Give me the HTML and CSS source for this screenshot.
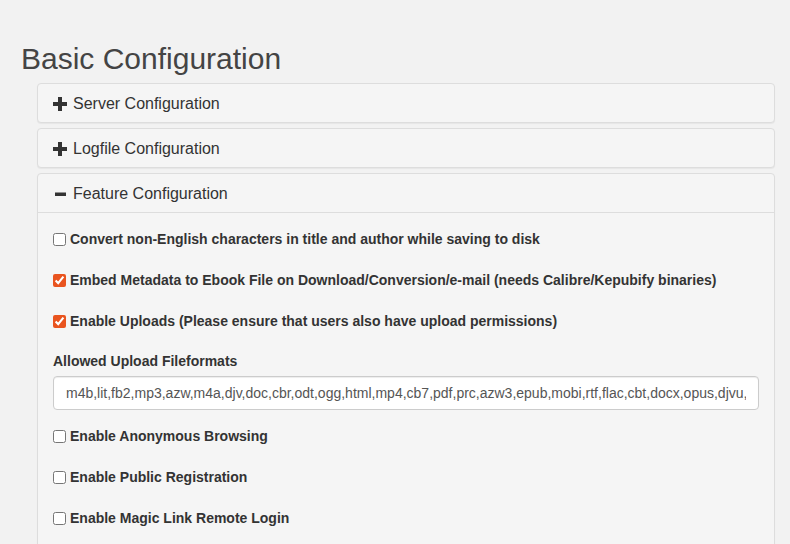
FILE: index.html
```html
<!DOCTYPE html>
<html lang="en">
<head>
<meta charset="utf-8">
<title>Basic Configuration</title>
<link rel="stylesheet" href="styles.css">
</head>
<body>
<div class="page">
  <h2 class="title">Basic Configuration</h2>
  <div class="panel-group">
    <div class="panel">
      <div class="panel-heading">
        <span class="icon"><svg width="14" height="14" viewBox="0 0 14 14"><path d="M5 0h4v5h5v4H9v5H5V9H0V5h5z" fill="#333"/></svg></span>
        <span class="panel-title">Server Configuration</span>
      </div>
    </div>
    <div class="panel">
      <div class="panel-heading">
        <span class="icon"><svg width="14" height="14" viewBox="0 0 14 14"><path d="M5 0h4v5h5v4H9v5H5V9H0V5h5z" fill="#333"/></svg></span>
        <span class="panel-title">Logfile Configuration</span>
      </div>
    </div>
    <div class="panel">
      <div class="panel-heading open">
        <span class="icon"><svg width="14" height="14" viewBox="0 0 14 14"><rect x="2" y="5.5" width="11" height="3.5" fill="#333"/></svg></span>
        <span class="panel-title">Feature Configuration</span>
      </div>
      <div class="panel-body">
        <label class="check"><input type="checkbox"><span>Convert non-English characters in title and author while saving to disk</span></label>
        <label class="check"><input type="checkbox" checked><span>Embed Metadata to Ebook File on Download/Conversion/e-mail (needs Calibre/Kepubify binaries)</span></label>
        <label class="check"><input type="checkbox" checked><span>Enable Uploads (Please ensure that users also have upload permissions)</span></label>
        <label class="field-label" for="formats">Allowed Upload Fileformats</label>
        <input class="form-control" id="formats" type="text" value="m4b,lit,fb2,mp3,azw,m4a,djv,doc,cbr,odt,ogg,html,mp4,cb7,pdf,prc,azw3,epub,mobi,rtf,flac,cbt,docx,opus,djvu,kepub,cbz,txt,wav,rar,zip">
        <label class="check"><input type="checkbox"><span>Enable Anonymous Browsing</span></label>
        <label class="check"><input type="checkbox"><span>Enable Public Registration</span></label>
        <label class="check"><input type="checkbox"><span>Enable Magic Link Remote Login</span></label>
      </div>
    </div>
  </div>
</div>
</body>
</html>
```

FILE: styles.css
```css
html, body {
  margin: 0;
  padding: 0;
  background: #f2f2f2;
  font-family: "Liberation Sans", Arial, Helvetica, sans-serif;
  font-size: 14px;
  color: #333;
}

.page {
  padding: 0 15px 0 21px;
  height: 544px;
  overflow: hidden;
}

.title {
  margin: 42px 0 8px 0;
  font-size: 30px;
  font-weight: 400;
  line-height: 1.1;
  color: #444;
}

.panel-group {
  margin-left: 16px;
  display: flex;
  flex-direction: column;
  gap: 5px;
}

.panel {
  background: #f5f5f5;
  border: 1px solid #ddd;
  border-radius: 4px;
  box-shadow: 0 1px 1px rgba(0, 0, 0, 0.05);
}

.panel-heading {
  display: flex;
  align-items: center;
  padding: 11px 15px 9px 15px;
  height: 18px;
}

.panel-heading.open {
  border-bottom: 1px solid #ddd;
}

.icon {
  width: 14px;
  height: 14px;
  margin-right: 6px;
  display: flex;
}

.panel-title {
  font-size: 16px;
  line-height: 18px;
  color: #333;
}

.panel-body {
  padding: 16px 15px 15px 15px;
  display: flex;
  flex-direction: column;
}

.check {
  display: flex;
  align-items: center;
  height: 20px;
  margin-bottom: 21px;
  font-weight: 700;
  white-space: nowrap;
}

.check input {
  width: 13px;
  height: 13px;
  margin: 0 4px 0 0;
  accent-color: #e9541f;
}

.field-label {
  display: block;
  font-weight: 700;
  line-height: 20px;
  margin-top: -1px;
  margin-bottom: 5px;
}

.form-control {
  box-sizing: border-box;
  height: 34px;
  width: 100%;
  padding: 6px 12px;
  font-family: inherit;
  font-size: 14px;
  color: #555;
  background: #fff;
  border: 1px solid #ccc;
  border-radius: 4px;
  box-shadow: inset 0 1px 1px rgba(0, 0, 0, 0.075);
  margin-bottom: 16px;
}
```
